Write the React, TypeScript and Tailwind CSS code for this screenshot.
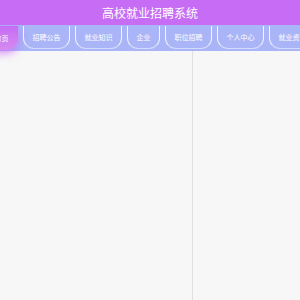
const tabs = ['首页', '招聘公告', '就业知识', '企业', '职位招聘', '个人中心', '就业资讯']

function NavTab({ label, active }: { label: string; active?: boolean }) {
  if (active) {
    return (
      <div className="flex h-[24px] shrink-0 items-center justify-center rounded-br-[12px] bg-gradient-to-b from-[#c66cf4] to-[#d58af0] px-[9.5px] text-[7px] text-white shadow-[0_3px_8px_rgba(200,100,245,0.75)]">
        {label}
      </div>
    )
  }
  return (
    <div className="flex h-[23px] shrink-0 items-center justify-center rounded-b-[11px] border border-t-0 border-white/85 border-b-white/50 px-[8.5px] text-[7px] text-white">
      {label}
    </div>
  )
}

export default function App() {
  return (
    <div className="flex h-[300px] w-[300px] flex-col overflow-hidden bg-[#f7f7f7] font-['Noto_Sans_CJK_SC',sans-serif]">
      <header className="flex h-[25px] shrink-0 items-center justify-center bg-[#c76df5] text-[12px] text-white">
        高校就业招聘系统
      </header>
      <nav className="relative z-10 h-[26px] shrink-0 overflow-visible bg-[#a9b5f7] pt-[1px]">
        <div className="-ml-[15px] flex gap-[5px]">
          {tabs.map((t, i) => (
            <NavTab key={t} label={t} active={i === 0} />
          ))}
        </div>
      </nav>
      <main className="flex flex-1">
        <div className="w-[193px] border-r border-[#e0e0e0]" />
        <div className="flex-1" />
      </main>
    </div>
  )
}
